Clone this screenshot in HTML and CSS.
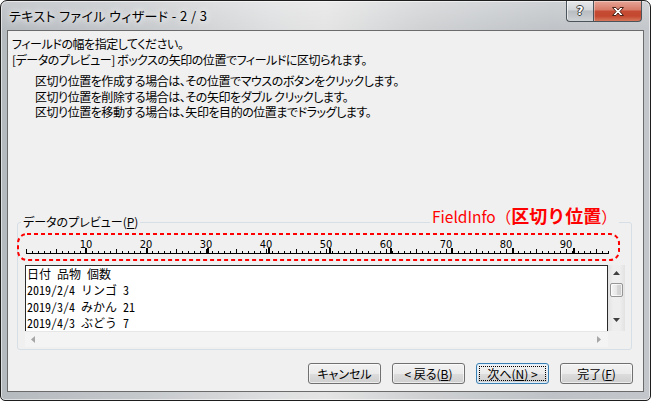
FILE: index.html
```html
<!DOCTYPE html>
<html lang="ja">
<head>
<meta charset="utf-8">
<title>テキスト ファイル ウィザード - 2 / 3</title>
<link rel="stylesheet" href="styles.css">
</head>
<body>
<div class="window">
  <div class="titlebar">
    <div class="title">テキスト ファイル ウィザード - 2 / 3</div>
    <div class="caption-buttons">
      <div class="cap-btn help"><span class="help-glyph">?</span></div>
      <div class="cap-btn close">
        <svg class="close-glyph" width="14" height="11" viewBox="0 0 14 11"><path d="M1.5 1.5 H5 L7 4 L9 1.5 H12.5 L8.9 5.5 L12.5 9.5 H9 L7 7 L5 9.5 H1.5 L5.1 5.5 Z" fill="#fff" stroke="#4a2218" stroke-width="1" stroke-linejoin="round"/></svg>
      </div>
    </div>
  </div>
  <div class="client">
    <div class="instructions">
      <div class="intro">
        <div class="line">フィールドの幅を指定してください。</div>
        <div class="line">[データのプレビュー] ボックスの矢印の位置でフィールドに区切られます。</div>
      </div>
      <div class="steps">
        <div class="line">区切り位置を作成する場合は、その位置でマウスのボタンをクリックします。</div>
        <div class="line">区切り位置を削除する場合は、その矢印をダブル クリックします。</div>
        <div class="line">区切り位置を移動する場合は、矢印を目的の位置までドラッグします。</div>
      </div>
    </div>
    <div class="group-wrap">
      <fieldset class="group">
        <legend>データのプレビュー(<u>P</u>)</legend>
        <div class="ruler">
          <div class="ruler-labels"><span>10</span><span>20</span><span>30</span><span>40</span><span>50</span><span>60</span><span>70</span><span>80</span><span>90</span></div>
        </div>
        <div class="preview">
          <div class="preview-text">日付 品物 個数
2019/2/4 リンゴ 3
2019/3/4 みかん 21
2019/4/3 ぶどう 7</div>
          <div class="vscroll">
            <div class="sb-btn"><svg width="7" height="4" viewBox="0 0 7 4"><path d="M3.5 0 L7 4 H0 Z" fill="#404040"/></svg></div>
            <div class="thumb"></div>
            <div class="sb-space"></div>
            <div class="sb-btn down"><svg width="7" height="4" viewBox="0 0 7 4"><path d="M0 0 H7 L3.5 4 Z" fill="#404040"/></svg></div>
          </div>
          <div class="hscroll">
            <svg width="4" height="7" viewBox="0 0 4 7"><path d="M4 0 V7 L0 3.5 Z" fill="#a6a6a6"/></svg>
            <svg width="4" height="7" viewBox="0 0 4 7"><path d="M0 0 L4 3.5 L0 7 Z" fill="#a6a6a6"/></svg>
          </div>
          <div class="corner"></div>
        </div>
      </fieldset>
      <div class="note-label">FieldInfo（<b>区切り位置</b>）</div>
      <svg class="note-box" width="603" height="29" viewBox="0 0 603 29"><rect x="1" y="1" width="601" height="26" rx="9" ry="9" fill="none" stroke="#ff0000" stroke-width="2" stroke-dasharray="4 3"/></svg>
    </div>
    <div class="buttons">
      <div class="btn">キャンセル</div>
      <div class="btn">&lt; 戻る(<u>B</u>)</div>
      <div class="btn default">次へ(<u>N</u>) &gt;</div>
      <div class="btn">完了(<u>F</u>)</div>
    </div>
  </div>
</div>
</body>
</html>
```
FILE: styles.css
```css
html, body {
  margin: 0;
  padding: 0;
  background: #ffffff;
}
body {
  width: 651px;
  height: 401px;
  overflow: hidden;
  font-family: "Noto Sans CJK JP", "Noto Sans", sans-serif;
  color: #000;
}
.window {
  box-sizing: border-box;
  width: 651px;
  height: 401px;
  border: 1px solid #1e1e1e;
  border-radius: 7px 7px 5px 5px;
  padding: 0 6px 8px;
  display: flex;
  flex-direction: column;
  background:
    linear-gradient(to bottom, rgba(255,255,255,0.25), rgba(255,255,255,0) 30px),
    linear-gradient(to right, #b5babf 0%, #c6c9cc 22%, #dedfe0 42%, #e4e4e4 50%, #cfd1d3 65%, #bfc3c7 85%, #c3c6ca 100%);
  box-shadow: inset 0 0 0 1px rgba(255,255,255,0.55);
}
.titlebar {
  height: 29px;
  display: flex;
  align-items: flex-start;
}
.title {
  flex: 1;
  padding-left: 2px;
  line-height: 29px;
  font-size: 13px;
  letter-spacing: 0.4px;
  font-feature-settings: "palt";
  white-space: nowrap;
  text-shadow: 0 0 6px #ffffff, 0 0 10px rgba(255,255,255,0.9);
}
.caption-buttons {
  display: flex;
  margin-right: 2px;
}
.cap-btn {
  box-sizing: border-box;
  height: 21px;
  border: 1px solid #4b535b;
  border-top: none;
  display: flex;
  align-items: center;
  justify-content: center;
}
.help {
  width: 27px;
  border-right: none;
  border-radius: 0 0 0 4px;
  background: linear-gradient(#e6e8ea 0%, #d3d6d9 45%, #b8bdc2 50%, #c4c8cc 80%, #d0d3d6 100%);
  box-shadow: inset 1px 1px 0 rgba(255,255,255,0.6);
}
.help-glyph {
  font-family: "DejaVu Sans", sans-serif;
  font-weight: bold;
  font-size: 12px;
  line-height: 12px;
  color: #ffffff;
  text-shadow: 1px 0 0 #3c3c3c, -1px 0 0 #3c3c3c, 0 1px 0 #3c3c3c, 0 -1px 0 #3c3c3c;
}
.close {
  width: 49px;
  border-radius: 0 0 4px 0;
  background: linear-gradient(#e6a596 0%, #d77a68 45%, #c54b34 50%, #c4482f 75%, #d5775a 100%);
  box-shadow: inset 1px 1px 0 rgba(255,255,255,0.35);
}
.close-glyph {
  display: block;
}
.client {
  flex: 1;
  display: flex;
  flex-direction: column;
  background: #f0f0f0;
  border: 1px solid #6b6b6b;
}
.instructions {
  flex: 1;
  padding: 5px 0 0 4px;
  font-size: 12px;
  font-feature-settings: "palt";
  white-space: nowrap;
  letter-spacing: -0.45px;
}
.intro .line {
  height: 15.5px;
  line-height: 15.5px;
}
.steps {
  margin: 6px 0 0 23px;
}
.steps .line {
  height: 15.5px;
  line-height: 15.5px;
}
.group-wrap {
  position: relative;
  margin: 0 11px 13px 9px;
}
.group {
  margin: 0;
  min-width: 0;
  padding: 3px 6px 2px 7px;
  border: 1px solid #d5dfe5;
  border-radius: 3px;
}
.group legend {
  margin-left: -4px;
  padding: 0 2px;
  font-size: 12px;
  line-height: 14px;
  font-feature-settings: "palt";
}
.ruler {
  width: 583px;
  height: 22px;
  margin-left: 1px;
  background:
    linear-gradient(#000, #000) left bottom / 100% 1px no-repeat,
    repeating-linear-gradient(to right, #000 0 1px, transparent 1px 6px) left bottom / 100% 3px no-repeat,
    repeating-linear-gradient(to right, #000 0 1px, transparent 1px 30px) left bottom / 100% 5px no-repeat,
    repeating-linear-gradient(to right, transparent 0 59px, #000 59px 61px, transparent 61px 60px) left bottom / 100% 6px no-repeat;
}
.ruler-labels {
  display: flex;
  padding: 7px 0 0 30px;
}
.ruler-labels span {
  width: 60px;
  flex: none;
  text-align: center;
  font-family: "Liberation Sans Narrow", "DejaVu Sans Condensed", "Liberation Sans", sans-serif;
  font-size: 11px;
  line-height: 12px;
  color: #000;
}
.preview {
  margin-top: 11px;
  display: grid;
  grid-template-columns: 583px 17px;
  grid-template-rows: 66px 16px;
}
.preview-text {
  box-sizing: border-box;
  background: #ffffff;
  border: 1px solid #2a2a2a;
  border-bottom: none;
  padding: 0 0 0 1px;
  font-family: "Noto Sans Mono CJK JP", "Liberation Mono", monospace;
  font-size: 12px;
  line-height: 16.3px;
  white-space: pre;
  overflow: hidden;
}
.vscroll {
  display: flex;
  flex-direction: column;
  align-items: center;
  background: linear-gradient(to right, #e2e2e2, #eeeeee 30%, #eeeeee 70%, #e2e2e2);
}
.sb-btn {
  height: 16px;
  width: 17px;
  display: flex;
  align-items: center;
  justify-content: center;
}
.sb-btn.down {
  margin-bottom: 3px;
}
.thumb {
  box-sizing: border-box;
  width: 13px;
  height: 14px;
  margin-top: 2px;
  border: 1px solid #959595;
  border-radius: 2px;
  background: linear-gradient(to right, #f5f5f5 0%, #e6e6e6 50%, #d8d8d8 51%, #cdcdcd 100%);
  box-shadow: inset 0 0 0 1px rgba(255,255,255,0.7);
}
.sb-space {
  flex: 1;
}
.hscroll {
  display: flex;
  align-items: center;
  justify-content: space-between;
  padding: 0 7px 0 6px;
  background: #f4f4f4;
  border-top: 1px solid #e6e6e6;
}
.corner {
  background: #f0f0f0;
}
.note-label {
  position: absolute;
  left: 413px;
  top: -11px;
  padding: 0 2px;
  background: #f0f0f0;
  color: #ff0000;
  font-size: 15.5px;
  line-height: 22px;
  white-space: nowrap;
}
.note-label b {
  font-size: 18px;
  font-weight: bold;
}
.note-box {
  position: absolute;
  left: 0;
  top: 18px;
}
.buttons {
  display: flex;
  justify-content: flex-end;
  gap: 11px;
  margin: 0 10px 7px 0;
}
.btn {
  position: relative;
  box-sizing: border-box;
  width: 73px;
  height: 21px;
  border: 1px solid #707070;
  border-radius: 3px;
  background: linear-gradient(#f2f2f2 0%, #ebebeb 50%, #dddddd 51%, #cfcfcf 100%);
  box-shadow: inset 0 0 0 1px rgba(255,255,255,0.6);
  display: flex;
  align-items: center;
  justify-content: center;
  font-size: 12px;
  line-height: 14px;
  font-feature-settings: "palt";
  white-space: nowrap;
}
.btn.default {
  border-color: #3c7fb1;
  box-shadow: inset 0 0 0 1px rgba(220,240,255,0.9);
}
.btn.default::after {
  content: "";
  position: absolute;
  left: 2px;
  top: 2px;
  right: 2px;
  bottom: 2px;
  border: 1px dotted #000;
}
```
